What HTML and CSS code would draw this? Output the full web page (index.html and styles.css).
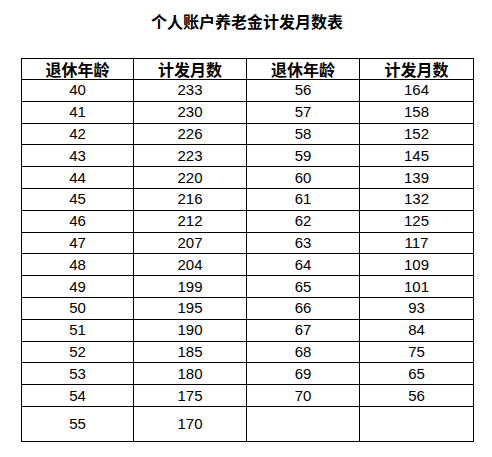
FILE: index.html
```html
<!DOCTYPE html>
<html lang="zh">
<head>
<meta charset="utf-8">
<link rel="stylesheet" href="styles.css">
</head>
<body>
<div class="page">
  <h1 class="title">个人账户养老金计发月数表</h1>
  <table class="tbl">
    <colgroup><col class="c1"><col class="c2"><col class="c3"><col class="c4"></colgroup>
    <thead>
      <tr class="head"><th>退休年龄</th><th>计发月数</th><th>退休年龄</th><th>计发月数</th></tr>
    </thead>
    <tbody>
      <tr><td>40</td><td>233</td><td>56</td><td>164</td></tr>
      <tr><td>41</td><td>230</td><td>57</td><td>158</td></tr>
      <tr><td>42</td><td>226</td><td>58</td><td>152</td></tr>
      <tr><td>43</td><td>223</td><td>59</td><td>145</td></tr>
      <tr><td>44</td><td>220</td><td>60</td><td>139</td></tr>
      <tr><td>45</td><td>216</td><td>61</td><td>132</td></tr>
      <tr><td>46</td><td>212</td><td>62</td><td>125</td></tr>
      <tr><td>47</td><td>207</td><td>63</td><td>117</td></tr>
      <tr><td>48</td><td>204</td><td>64</td><td>109</td></tr>
      <tr><td>49</td><td>199</td><td>65</td><td>101</td></tr>
      <tr><td>50</td><td>195</td><td>66</td><td>93</td></tr>
      <tr><td>51</td><td>190</td><td>67</td><td>84</td></tr>
      <tr><td>52</td><td>185</td><td>68</td><td>75</td></tr>
      <tr><td>53</td><td>180</td><td>69</td><td>65</td></tr>
      <tr><td>54</td><td>175</td><td>70</td><td>56</td></tr>
      <tr class="last"><td>55</td><td>170</td><td></td><td></td></tr>
    </tbody>
  </table>
</div>
</body>
</html>
```
FILE: styles.css
```css
html, body {
  margin: 0;
  padding: 0;
  background: #fff;
}
.page {
  width: 492px;
  height: 457px;
  padding-left: 21px;
  box-sizing: border-box;
}
.title {
  margin: 0;
  width: 452px;
  height: 58px;
  padding-top: 10px;
  box-sizing: border-box;
  text-align: center;
  font-family: "Noto Sans CJK SC", sans-serif;
  font-weight: 700;
  font-size: 16px;
  line-height: 22px;
  color: #000;
}
.tbl {
  border-collapse: collapse;
  table-layout: fixed;
  width: 452px;
  color: #000;
}
.c1 { width: 112px; }
.c2 { width: 113px; }
.c3 { width: 113px; }
.c4 { width: 114px; }
.tbl th, .tbl td {
  border: 1px solid #000;
  padding: 0;
  text-align: center;
  vertical-align: middle;
}
.tbl th {
  height: 20px;
  font-family: "Noto Sans CJK SC", sans-serif;
  font-weight: 700;
  font-size: 16px;
  line-height: 20px;
}
.tbl td {
  height: 20.8px;
  font-family: "Liberation Sans", Arial, sans-serif;
  font-weight: 400;
  font-size: 15px;
  line-height: 20px;
}
.tbl tr.last td {
  height: 34px;
}
```
